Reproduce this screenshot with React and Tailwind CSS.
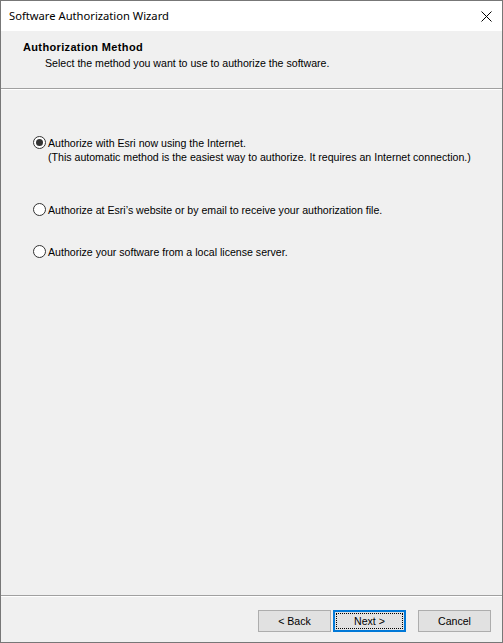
import { useState } from 'react'

const options = [
  {
    id: 'internet',
    label: 'Authorize with Esri now using the Internet.',
    note: '(This automatic method is the easiest way to authorize. It requires an Internet connection.)',
  },
  {
    id: 'website',
    label: "Authorize at Esri\u2019s website or by email to receive your authorization file.",
  },
  {
    id: 'server',
    label: 'Authorize your software from a local license server.',
  },
]

function Radio({ checked }) {
  return (
    <span className="w-[13px] h-[13px] shrink-0 rounded-full border border-[#333333] bg-white flex items-center justify-center">
      {checked && <span className="w-[7px] h-[7px] rounded-full bg-[#333333]" />}
    </span>
  )
}

function Button({ children, focused }) {
  if (focused) {
    return (
      <button className="w-[73px] h-[22px] border-2 border-[#0078d7] bg-[#e1e1e1] p-[1px]">
        <span className="w-full h-full flex items-center justify-center pt-[1px] border border-dotted border-black">
          {children}
        </span>
      </button>
    )
  }
  return (
    <button className="w-[73px] h-[22px] border border-[#adadad] bg-[#e1e1e1] flex items-center justify-center pt-[1px]">
      {children}
    </button>
  )
}

export default function App() {
  const [method, setMethod] = useState('internet')

  return (
    <div className="w-[503px] h-[643px] border border-[#777777] bg-[#f0f0f0] flex flex-col text-[10.6px] text-black font-['Liberation_Sans',Arial,sans-serif]">

      {/* Title bar */}
      <div className="h-[30px] bg-white flex items-center justify-between pl-[8px] pr-[9px]">
        <span className="text-[11.2px] font-['Noto_Sans',sans-serif] leading-none">Software Authorization Wizard</span>
        <svg width="11" height="11" viewBox="0 0 11 11" className="mr-[1px]">
          <path d="M0.5 0.5 L10.5 10.5 M10.5 0.5 L0.5 10.5" stroke="#000" strokeWidth="1" />
        </svg>
      </div>

      {/* Header */}
      <div className="h-[58px] pl-[22px] pt-[10px] border-b border-[#a0a0a0]">
        <p className="font-bold text-[11px] tracking-[0.35px] leading-[13px]">Authorization Method</p>
        <p className="pl-[22px] mt-[3px] leading-[13px]">Select the method you want to use to authorize the software.</p>
      </div>
      <div className="h-px bg-white" />

      {/* Options */}
      <div className="flex-1 pl-[32px] pt-[46px] flex flex-col">
        {options.map((o, i) => (
          <label
            key={o.id}
            onClick={() => setMethod(o.id)}
            className={`flex items-start gap-[2px] ${i === 1 ? 'mt-[39px]' : i === 2 ? 'mt-[28px]' : ''}`}
          >
            <Radio checked={method === o.id} />
            <span className="leading-[14px]">
              {o.label}
              {o.note && <span className="block">{o.note}</span>}
            </span>
          </label>
        ))}
      </div>

      {/* Footer */}
      <div className="h-px bg-[#a0a0a0]" />
      <div className="h-px bg-white" />
      <div className="h-[45px] flex justify-end items-start pt-[13px] pr-[11px]">
        <div className="flex gap-[2px]">
          <Button>&lt; Back</Button>
          <Button focused>Next &gt;</Button>
        </div>
        <div className="ml-[12px]">
          <Button>Cancel</Button>
        </div>
      </div>
    </div>
  )
}
